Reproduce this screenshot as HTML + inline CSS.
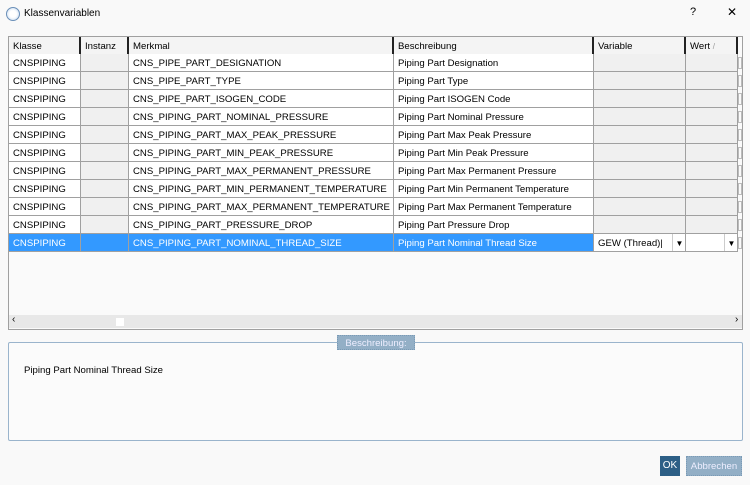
<!DOCTYPE html>
<html><head><style>
*{margin:0;padding:0;box-sizing:border-box}
body{width:750px;height:485px;background:#f9f9f9;font-family:"Liberation Sans",sans-serif;font-size:10px;color:#000;position:relative;overflow:hidden}
.a{position:absolute}
.grid{left:8px;top:36px;width:735px;height:294px;border:1px solid #a0a0a0;background:#fafafa}
.c{position:absolute;height:18px;line-height:19px;padding-left:4px;border-right:1px solid #a0a0a0;border-bottom:1px solid #a0a0a0;white-space:nowrap;overflow:hidden;font-size:9.6px}
.h{border-right:2px solid #222;border-bottom:1px solid #a0a0a0;background:#f4f4f4}
.w{background:#fff}.g{background:#f0f0f0}
.s{background:#3399ff;color:#fff}
</style></head><body>
<div class="a" style="left:6px;top:7px;width:14px;height:14px;border-radius:50%;border:1px solid #6a8fb8;background:radial-gradient(circle at 50% 50%,#fff 40%,#bcd3ee 100%)"></div>
<div class="a" style="left:24px;top:8px;font-size:10px">Klassenvariablen</div>
<div class="a" style="left:690px;top:6px;font-size:11px">?</div>
<div class="a" style="left:727px;top:5px;font-size:12px">✕</div>
<div class="a grid"></div>
<div id="t"></div>
<div class="a" style="left:9px;top:315px;width:733px;height:13px;background:#e8e8e8"></div>
<div class="a" style="left:12px;top:314px;font-size:10px">‹</div>
<div class="a" style="left:735px;top:314px;font-size:10px">›</div>
<div class="a" style="left:116px;top:318px;width:8px;height:8px;background:#fff"></div>
<div class="a" style="left:8px;top:342px;width:735px;height:99px;border:1px solid #9ab4cc;border-radius:2px;background:#fbfbfb"></div>
<div class="a" style="left:337px;top:335px;width:78px;height:15px;background:#93afc6;color:#eef;font-size:9.6px;text-align:center;line-height:15px;border:1px dotted #7a9ab5">Beschreibung:</div>
<div class="a" style="left:24px;top:365px;font-size:9.6px">Piping Part Nominal Thread Size</div>
<div class="a" style="left:660px;top:456px;width:20px;height:20px;background:#2d5f86;color:#fff;text-align:center;line-height:20px;font-size:10px">OK</div>
<div class="a" style="left:686px;top:456px;width:56px;height:20px;background:#93afc6;color:#eef;text-align:center;line-height:20px;font-size:9.6px;border:1px dotted #7a9ab5">Abbrechen</div>
<script>
var cols=[[9,72,'w'],[81,48,'g'],[129,265,'w'],[394,200,'w'],[594,92,'g'],[686,52,'g']];
var hd=['Klasse','Instanz','Merkmal','Beschreibung','Variable','Wert'];
var m=['CNS_PIPE_PART_DESIGNATION','CNS_PIPE_PART_TYPE','CNS_PIPE_PART_ISOGEN_CODE','CNS_PIPING_PART_NOMINAL_PRESSURE','CNS_PIPING_PART_MAX_PEAK_PRESSURE','CNS_PIPING_PART_MIN_PEAK_PRESSURE','CNS_PIPING_PART_MAX_PERMANENT_PRESSURE','CNS_PIPING_PART_MIN_PERMANENT_TEMPERATURE','CNS_PIPING_PART_MAX_PERMANENT_TEMPERATURE','CNS_PIPING_PART_PRESSURE_DROP','CNS_PIPING_PART_NOMINAL_THREAD_SIZE'];
var b=['Piping Part Designation','Piping Part Type','Piping Part ISOGEN Code','Piping Part Nominal Pressure','Piping Part Max Peak Pressure','Piping Part Min Peak Pressure','Piping Part Max Permanent Pressure','Piping Part Min Permanent Temperature','Piping Part Max Permanent Temperature','Piping Part Pressure Drop','Piping Part Nominal Thread Size'];
var h='';
cols.forEach(function(c,i){h+='<div class="c h" style="left:'+c[0]+'px;top:37px;width:'+c[1]+'px">'+hd[i]+(i==5?' <span style="color:#999;font-size:8px">/</span>':'')+'</div>';});
for(var r=0;r<11;r++){var y=54+r*18;var v=['CNSPIPING','',m[r],b[r],'',''];
cols.forEach(function(c,i){var cl=c[2];if(r==10&&i<4)cl='s';if(r==10&&i>=4)cl='w';
var t=v[i];if(r==10&&i==4)t='GEW (Thread)|<span style="position:absolute;left:78px;top:0;width:14px;border-left:1px solid #ccc;text-align:center;font-size:8px">▼</span>';
if(r==10&&i==5)t='<span style="position:absolute;left:38px;top:0;width:14px;border-left:1px solid #ccc;text-align:center;font-size:8px">▼</span>';
h+='<div class="c '+cl+'" style="left:'+c[0]+'px;top:'+y+'px;width:'+c[1]+'px">'+t+'</div>';});
h+='<div class="a" style="left:738px;top:'+(y+3)+'px;width:4px;height:12px;border:1px solid #bbb"></div>';}
document.getElementById('t').innerHTML=h;
</script>
</body></html>
